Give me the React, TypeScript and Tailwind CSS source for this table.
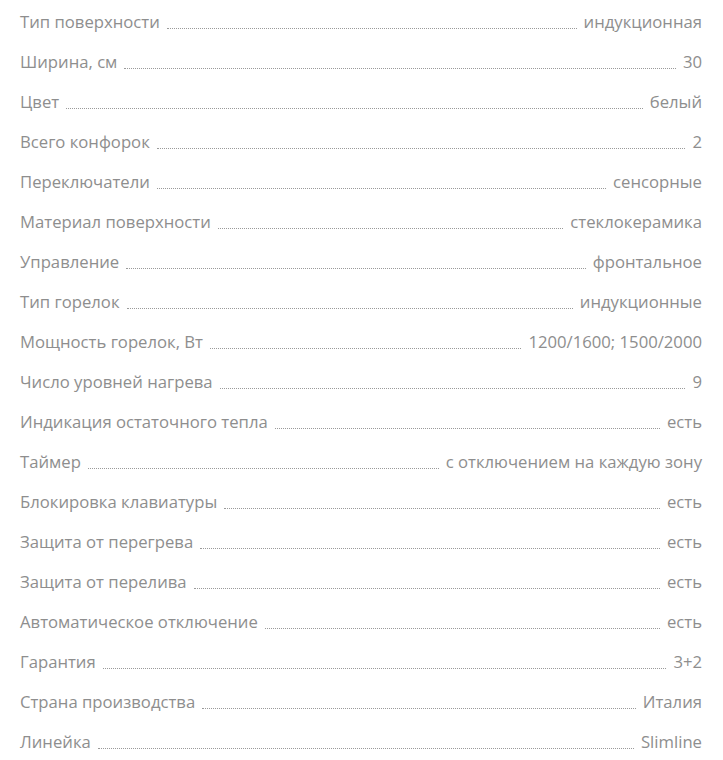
const specs: [string, string][] = [
  ["Тип поверхности", "индукционная"],
  ["Ширина, см", "30"],
  ["Цвет", "белый"],
  ["Всего конфорок", "2"],
  ["Переключатели", "сенсорные"],
  ["Материал поверхности", "стеклокерамика"],
  ["Управление", "фронтальное"],
  ["Тип горелок", "индукционные"],
  ["Мощность горелок, Вт", "1200/1600; 1500/2000"],
  ["Число уровней нагрева", "9"],
  ["Индикация остаточного тепла", "есть"],
  ["Таймер", "с отключением на каждую зону"],
  ["Блокировка клавиатуры", "есть"],
  ["Защита от перегрева", "есть"],
  ["Защита от перелива", "есть"],
  ["Автоматическое отключение", "есть"],
  ["Гарантия", "3+2"],
  ["Страна производства", "Италия"],
  ["Линейка", "Slimline"],
];

const SpecRow = ({ label, value }: { label: string; value: string }) => (
  <div className="flex h-10 items-center">
    <span className="whitespace-nowrap">{label}</span>
    <div className="mx-[7px] mt-[12px] h-0 flex-1 border-b border-dotted border-[#9a9a9a]" />
    <span className="whitespace-nowrap">{value}</span>
  </div>
);

export default function App() {
  return (
    <div
      className="bg-white pl-5 pr-[21px] pt-[2px] text-[16.7px] text-[#8e8e8e]"
      style={{ fontFamily: '"Open Sans", sans-serif' }}
    >
      {specs.map(([label, value]) => (
        <SpecRow key={label} label={label} value={value} />
      ))}
    </div>
  );
}
